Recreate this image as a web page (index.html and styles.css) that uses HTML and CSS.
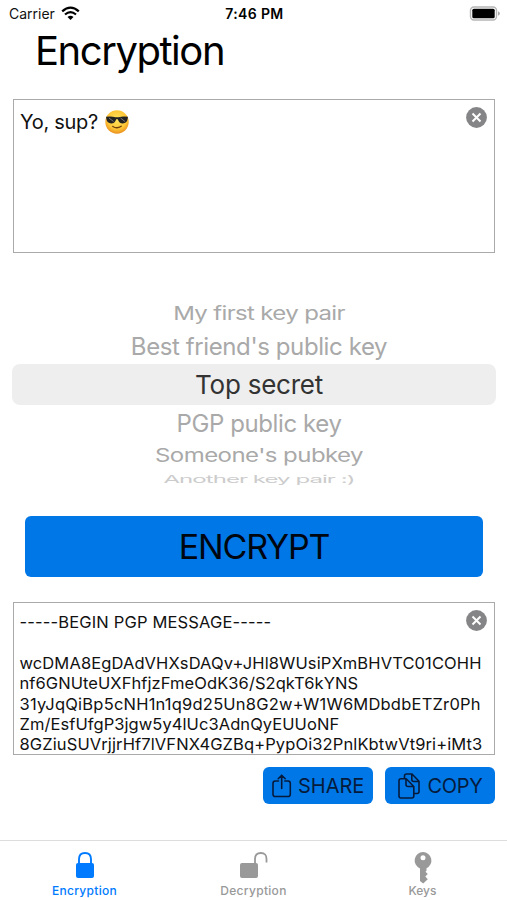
FILE: index.html
```html
<!DOCTYPE html>
<html lang="en">
<head>
  <meta charset="UTF-8">
  <title>Encryption</title>
  <link rel="stylesheet" href="styles.css">
</head>
<body>
  <div class="app">
    <header class="status">
      <div class="carrier">
        <span>Carrier</span>
        <svg width="19" height="15" viewBox="0 0 19 15">
          <path d="M1.2 5.3Q9.5-2 17.8 5.3" fill="none" stroke="#000" stroke-width="2.3"/>
          <path d="M4 8.5Q9.5 3.8 15 8.5" fill="none" stroke="#000" stroke-width="2.2"/>
          <path d="M6.5 11Q9.5 8.6 12.5 11L9.5 14Z"/>
        </svg>
      </div>
      <span class="time">7:46 PM</span>
      <svg class="battery" width="31" height="15" viewBox="0 0 31 15">
        <rect x="1.5" y="1" width="26" height="13" rx="3.5" fill="#fff" stroke="#b5b5b5" stroke-width="1.4"/>
        <rect x="3.3" y="2.8" width="22.4" height="9.4" rx="1.5"/>
        <path d="M29 5.2Q30.9 6 30.9 7.5T29 9.8Z" fill="#aaa"/>
      </svg>
    </header>

    <h1>Encryption</h1>

    <div class="box message">
      <span>Yo, sup?</span>
      <svg class="emoji" width="24" height="24" viewBox="0 0 24 24" role="img" aria-label="😎">
        <defs>
          <radialGradient id="face" cx=".5" cy=".4" r=".62">
            <stop offset="0" stop-color="#ffe45c"/>
            <stop offset=".65" stop-color="#fdc636"/>
            <stop offset="1" stop-color="#e8891c"/>
          </radialGradient>
        </defs>
        <circle cx="12" cy="12" r="11.7" fill="url(#face)"/>
        <path d="M1 6.8Q6 5.8 10.5 7.2H13.5Q18 5.8 23 6.8L22.6 9Q21.8 13.4 17.8 13.4Q14 13.4 12.8 9.2H11.2Q10 13.4 6.2 13.4Q2.2 13.4 1.4 9Z" fill="#222"/>
        <path d="M4 8L8.5 11.5M15.5 8L20 11.5" stroke="#777" stroke-width="1"/>
        <path d="M7.8 16.5Q12 19.3 16.2 16.2" fill="none" stroke="#70400c" stroke-width="1.4" stroke-linecap="round"/>
      </svg>
      <svg class="clear" width="21" height="21" viewBox="0 0 21 21">
        <circle cx="10.5" cy="10.5" r="10.4" fill="#858587"/>
        <path d="M6.5 6.5L14.5 14.5M14.5 6.5L6.5 14.5" stroke="#fff" stroke-width="2"/>
      </svg>
    </div>

    <div class="picker">
      <div class="row far first"><span>My first key pair</span></div>
      <div class="row near best"><span>Best friend's public key</span></div>
      <div class="row selected"><span>Top secret</span></div>
      <div class="row near pgp"><span>PGP public key</span></div>
      <div class="row far someone"><span>Someone's pubkey</span></div>
      <div class="row edge"><span>Another key pair :)</span></div>
    </div>

    <button class="encrypt"><span>ENCRYPT</span></button>

    <div class="box output">
      <div class="l1">-----BEGIN PGP MESSAGE-----</div>
      <div>&nbsp;</div>
      <div class="l2">wcDMA8EgDAdVHXsDAQv+JHl8WUsiPXmBHVTC01COHH</div>
      <div class="l3">nf6GNUteUXFhfjzFmeOdK36/S2qkT6kYNS</div>
      <div class="l4">31yJqQiBp5cNH1n1q9d25Un8G2w+W1W6MDbdbETZr0Ph</div>
      <div class="l5">Zm/EsfUfgP3jgw5y4lUc3AdnQyEUUoNF</div>
      <div class="l6">8GZiuSUVrjjrHf7lVFNX4GZBq+PypOi32PnlKbtwVt9ri+iMt3</div>
      <svg class="clear" width="21" height="21" viewBox="0 0 21 21">
        <circle cx="10.5" cy="10.5" r="10.4" fill="#858587"/>
        <path d="M6.5 6.5L14.5 14.5M14.5 6.5L6.5 14.5" stroke="#fff" stroke-width="2"/>
      </svg>
    </div>

    <div class="actions">
      <button class="share">
        <svg width="20" height="24" viewBox="0 0 20 24" fill="none" stroke="#061b3c" stroke-width="1.6" stroke-linecap="round" stroke-linejoin="round">
          <path d="M6.5 7H3.3Q1 7 1 9.3V20.2Q1 22.5 3.3 22.5H16Q18.3 22.5 18.3 20.2V9.3Q18.3 7 16 7H12.8M9.7 14.5V1.3M6.2 4.7L9.7 1.2L13.2 4.7"/>
        </svg>
        <span>SHARE</span>
      </button>
      <button class="copy">
        <svg width="22" height="26" viewBox="0 0 22 26" fill="none" stroke="#061b3c" stroke-width="1.6" stroke-linejoin="round">
          <path d="M6.5 5.5V3Q6.5 1 8.5 1H14L21 8.3V18.5Q21 20.5 19 20.5H16M13.8 1V6.5Q13.8 8.5 15.8 8.5H21"/>
          <path d="M3 5.7H8.2L15.8 13.5V23Q15.8 25 13.8 25H3Q1 25 1 23V7.7Q1 5.7 3 5.7ZM8 5.7V11.5Q8 13.5 10 13.5H15.8"/>
        </svg>
        <span>COPY</span>
      </button>
    </div>

    <nav class="tabs">
      <div class="tab active">
        <svg width="28" height="32" viewBox="0 0 28 32">
          <rect x="5" y="13" width="18" height="15" rx="2" fill="currentColor"/>
          <path d="M8 14V9.3Q8 3 14 3T20 9.3V14" fill="none" stroke="currentColor" stroke-width="1.9"/>
        </svg>
        <span>Encryption</span>
      </div>
      <div class="tab decrypt">
        <svg width="28" height="32" viewBox="0 0 28 32">
          <rect x="0" y="13" width="18" height="15" rx="2" fill="currentColor"/>
          <path d="M15 14V9Q15 3 20.8 3T26.5 9V12.5" fill="none" stroke="currentColor" stroke-width="1.8"/>
        </svg>
        <span>Decryption</span>
      </div>
      <div class="tab keys">
        <svg width="28" height="32" viewBox="0 0 28 32">
          <path fill="currentColor" fill-rule="evenodd" d="M14 2a8.5 8.5 0 0 0-3 16.4V31L14.2 33.5 18.8 29.2 16.3 26.6 18.8 24 16.5 21.8 17.5 20.7V18.2A8.5 8.5 0 0 0 14 2ZM14 5.2a2.5 2.5 0 1 1 0 5 2.5 2.5 0 0 1 0-5Z"/>
        </svg>
        <span>Keys</span>
      </div>
    </nav>
  </div>
</body>
</html>
```
FILE: styles.css
```css
* {
  box-sizing: border-box;
}
body {
  margin: 0;
  font-family: Inter, "Liberation Sans", sans-serif;
  background: #fff;
  color: #111;
}
.app {
  width: 507px;
  height: 900px;
  display: flex;
  flex-direction: column;
  overflow: hidden;
}
svg {
  display: block;
  flex: none;
  overflow: visible;
}
button {
  border: 0;
  padding: 0;
  background: #0077e6;
  border-radius: 6px;
  font-family: inherit;
  color: #061b3c;
  display: flex;
  align-items: center;
}
.status {
  height: 27px;
  padding: 0 7px 0 9px;
  display: grid;
  grid-template-columns: 1fr auto 1fr;
  align-items: center;
  font-size: 14px;
}
.carrier {
  display: flex;
  align-items: center;
  gap: 6px;
}
.time {
  font-weight: 600;
  letter-spacing: .35px;
  color: #000;
}
.battery {
  justify-self: end;
}
h1 {
  margin: 0 0 24px 35px;
  height: 48px;
  line-height: 48px;
  font-size: 40px;
  font-weight: 400;
  letter-spacing: -1.45px;
  color: #000;
}
.box {
  position: relative;
  margin: 0 12px 0 13px;
  border: 1px solid #aaa;
  white-space: nowrap;
}
.clear {
  position: absolute;
  top: 7px;
  right: 7px;
}
.message {
  height: 154px;
  padding: 10px 6px;
  display: flex;
  align-items: flex-start;
  gap: 7px;
  font-size: 20px;
  line-height: 24px;
  letter-spacing: -.3px;
}
.picker {
  height: 263px;
  padding: 47px 11px 0 12px;
  display: flex;
  flex-direction: column;
}
.row {
  display: flex;
  justify-content: center;
  align-items: center;
  padding-left: 10px;
  font-size: 24px;
  white-space: nowrap;
  color: #a9a9a9;
}
.row span {
  display: inline-block;
}
.far {
  height: 27px;
}
.near {
  height: 38px;
  letter-spacing: -.4px;
}
.selected {
  height: 41px;
  margin-top: -1px;
  border-radius: 8px;
  background: #eee;
  color: #333;
  font-size: 26px;
  letter-spacing: -.25px;
}
.pgp {
  height: 36px;
}
.someone {
  height: 29px;
  letter-spacing: -.55px;
}
.first {
  letter-spacing: -.65px;
}
.edge {
  height: 19px;
  color: #ccc;
  letter-spacing: -.95px;
}
.first span,
.someone span {
  transform: scaleY(.77);
}
.edge span {
  transform: scaleY(.45);
}
.encrypt {
  flex: none;
  height: 61px;
  margin: 0 24px 0 25px;
  justify-content: center;
  font-size: 34px;
  letter-spacing: -1.2px;
  color: #00060f;
}
.output {
  height: 153px;
  flex: none;
  margin-top: 25px;
  padding: 9px 5.5px;
  overflow: hidden;
  font-size: 16.5px;
  line-height: 20.4px;
}
.l1 {
  letter-spacing: .16px;
}
.l2,
.l6 {
  letter-spacing: .11px;
}
.l3,
.l5 {
  letter-spacing: .07px;
}
.l4 {
  letter-spacing: .21px;
}
.actions {
  display: flex;
  justify-content: flex-end;
  gap: 12px;
  margin: 12px 12.5px 0 0;
}
.actions button {
  height: 37px;
  gap: 6px;
  padding-left: 9.5px;
  font-size: 20px;
}
.actions button.copy {
  padding-left: 13px;
  gap: 8px;
  letter-spacing: -.3px;
}
.share,
.copy {
  width: 110px;
}
.tabs {
  height: 60px;
  margin-top: auto;
  border-top: 1px solid #ddd;
  display: grid;
  grid-template-columns: repeat(3, 1fr);
}
.tab {
  display: flex;
  flex-direction: column;
  align-items: center;
  padding-top: 9px;
  gap: 1px;
  font-size: 12px;
  line-height: 15px;
  font-weight: 500;
  letter-spacing: .3px;
  color: #999;
}
.keys {
  letter-spacing: 0;
}
.active {
  color: #007aff;
}
```
